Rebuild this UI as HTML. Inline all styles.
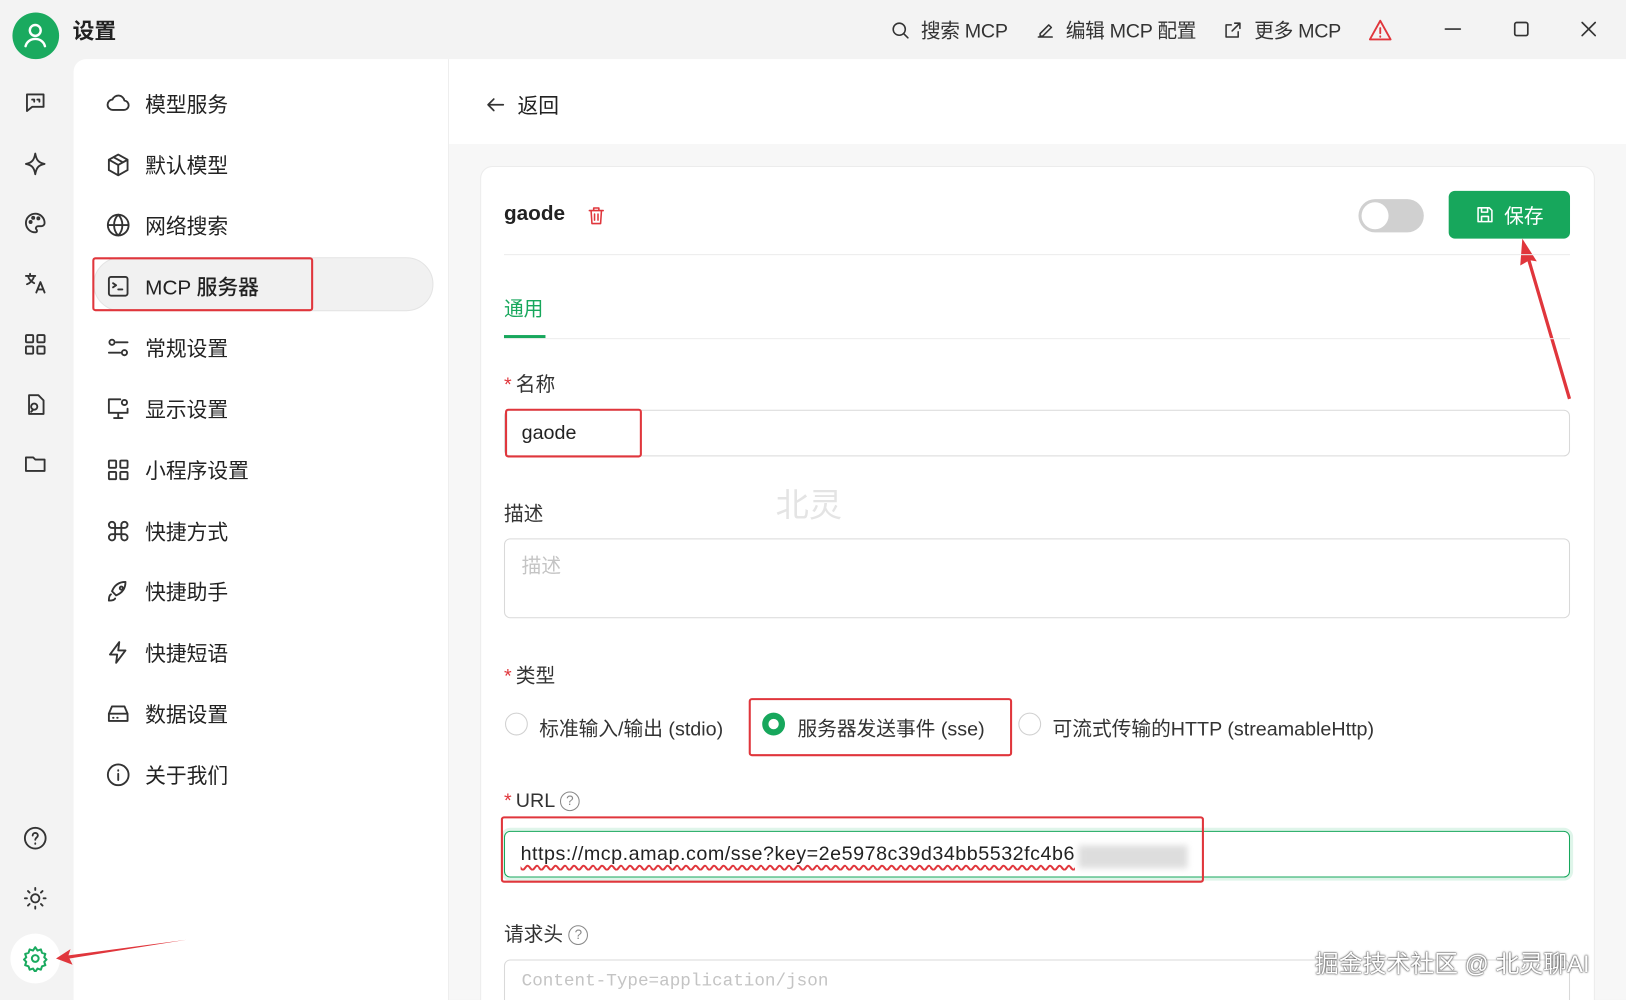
<!DOCTYPE html>
<html><head><meta charset="utf-8"><style>
*{box-sizing:border-box;margin:0;padding:0}
body{width:1626px;height:1000px;overflow:hidden;background:#f3f3f3;font-family:"Liberation Sans","Noto Sans CJK SC",sans-serif;color:#222}
#w{position:absolute;left:0;top:0;width:1568px;height:964px;overflow:hidden;transform:scale(1.037,1.0373);transform-origin:0 0;background:#f3f3f3}
.a{position:absolute}
svg{fill:none;stroke:#333;stroke-width:1.8;stroke-linecap:round;stroke-linejoin:round}
.nav{position:absolute;left:102px;font-size:20px;display:flex;align-items:center;gap:14px;color:#222}
.nav svg{width:24px;height:24px}
.rail svg{position:absolute;left:22px;width:24px;height:24px}
.red{position:absolute;border:2.5px solid #e0363c;border-radius:3px}
.inp{position:absolute;border:1px solid #d9d9d9;border-radius:6px;background:#fff}
.lbl{position:absolute;left:486px;font-size:19px;color:#333}
.lbl b{color:#e0363c;font-weight:normal;margin-right:4px}
.radio{position:absolute;width:22px;height:22px;border:1px solid #d0d0d0;border-radius:50%;background:#fff}
</style></head><body><div id="w">
<div class="a" style="left:12px;top:12px;width:45px;height:45px;border-radius:50%;background:#1aaa5f"><svg viewBox="0 0 24 24" style="width:28px;height:28px;margin:8px;stroke:#fff;stroke-width:2"><circle cx="12" cy="8" r="4.5"/><path d="M4 21c1-4 4.5-6 8-6s7 2 8 6"/></svg></div>
<div class="a" style="left:70px;top:14px;font-size:21px;font-weight:bold">设置</div>
<div class="a" style="left:858px;top:15px;font-size:19px;color:#333;display:flex;gap:26px;align-items:center;letter-spacing:-0.3px">
<span style="display:flex;gap:10px;align-items:center"><svg viewBox="0 0 24 24" width="20" height="20"><circle cx="11" cy="11" r="7"/><path d="M16 16l5 5"/></svg>搜索 MCP</span>
<span style="display:flex;gap:10px;align-items:center"><svg viewBox="0 0 24 24" width="20" height="20"><path d="M4 20h16M6 16l10-10 3 3-10 10H6z"/></svg>编辑 MCP 配置</span>
<span style="display:flex;gap:10px;align-items:center"><svg viewBox="0 0 24 24" width="20" height="20"><path d="M14 4h6v6M20 4l-9 9M18 14v6H4V6h6"/></svg>更多 MCP</span>
<svg viewBox="0 0 24 24" width="24" height="24" style="stroke:#e0363c"><path d="M12 3l10 18H2z M12 10v5M12 18v.5"/></svg>
</div>
<svg class="a" viewBox="0 0 20 20" style="left:1392px;top:19px;width:18px;height:18px"><path d="M2 10h16"/></svg>
<svg class="a" viewBox="0 0 20 20" style="left:1458px;top:19px;width:18px;height:18px"><rect x="3" y="3" width="14" height="14" rx="2"/></svg>
<svg class="a" viewBox="0 0 20 20" style="left:1523px;top:19px;width:18px;height:18px"><path d="M3 3l14 14M17 3L3 17"/></svg>
<div class="rail">
<svg viewBox="0 0 24 24" style="top:87px"><path d="M4 4h16v12H9l-5 4z"/><path d="M9 9h2v2M14 9h2v2"/></svg>
<svg viewBox="0 0 24 24" style="top:146px"><path d="M12 2c1 6 3 9 9 10-6 1-8 4-9 10-1-6-3-9-9-10 6-1 8-4 9-10z"/></svg>
<svg viewBox="0 0 24 24" style="top:203px"><path d="M12 3a9 9 0 100 18c2 0 2-2 1-3s0-3 2-3h3a3 3 0 003-3c0-5-4-9-9-9z"/><circle cx="7.5" cy="11" r="1"/><circle cx="10" cy="7" r="1"/><circle cx="15" cy="7.5" r="1"/></svg>
<svg viewBox="0 0 24 24" style="top:261px"><path d="M3 5h9M7 3v2M5 5c1 4 4 6 6 7M11 5c-1 4-4 7-7 8M13 21l4-10 4 10M14.5 18h5"/></svg>
<svg viewBox="0 0 24 24" style="top:320px"><rect x="3" y="3" width="7" height="7" rx="1"/><rect x="14" y="3" width="7" height="7" rx="1"/><rect x="3" y="14" width="7" height="7" rx="1"/><rect x="14" y="14" width="7" height="7" rx="1"/></svg>
<svg viewBox="0 0 24 24" style="top:378px"><path d="M6 3h9l5 5v13H6zM10 17l-2 2"/><circle cx="11" cy="14" r="3"/></svg>
<svg viewBox="0 0 24 24" style="top:435px"><path d="M3 6h7l2 2h9v11H3z"/></svg>
<svg viewBox="0 0 24 24" style="top:796px"><circle cx="12" cy="12" r="10"/><path d="M9.5 9.5a2.5 2.5 0 015 0c0 2-2.5 2-2.5 4M12 17v.5"/></svg>
<svg viewBox="0 0 24 24" style="top:854px"><circle cx="12" cy="12" r="4"/><path d="M12 2v2M12 20v2M2 12h2M20 12h2M5 5l1.5 1.5M17.5 17.5L19 19M5 19l1.5-1.5M17.5 6.5L19 5"/></svg>
</div>
<div class="a" style="left:10px;top:900px;width:48px;height:48px;border-radius:50%;background:#fff"><svg viewBox="0 0 24 24" style="width:26px;height:26px;margin:11px;stroke:#1aaa5f"><circle cx="12" cy="12" r="3"/><path d="M12 2l2 3 3-1 1 3 3 1-1 3 2 2-2 2 1 3-3 1-1 3-3-1-2 3-2-3-3 1-1-3-3-1 1-3-2-2 2-2-1-3 3-1 1-3 3 1z"/></svg></div>
<div class="a" style="left:71px;top:57px;width:362px;height:907px;background:#fff;border-top-left-radius:12px;border-right:1px solid #eee"></div>
<div class="a" style="left:90px;top:248px;width:328px;height:52px;border-radius:26px;background:#f1f1f1;border:1px solid #e4e4e4"></div>
<div class="nav" style="top:85px"><svg viewBox="0 0 24 24"><path d="M7 18a5 5 0 01-.5-10A6 6 0 0118 9a4.5 4.5 0 01-1 9z"/></svg>模型服务</div>
<div class="nav" style="top:144px"><svg viewBox="0 0 24 24"><path d="M12 2l9 5v10l-9 5-9-5V7zM3 7l9 5 9-5M12 12v10M7.5 4.5l9 5"/></svg>默认模型</div>
<div class="nav" style="top:202px"><svg viewBox="0 0 24 24"><circle cx="12" cy="12" r="10"/><path d="M2 12h20M12 2c3 3 4 6 4 10s-1 7-4 10c-3-3-4-6-4-10s1-7 4-10z"/></svg>网络搜索</div>
<div class="nav" style="top:261px;font-weight:500"><svg viewBox="0 0 24 24"><rect x="3" y="3" width="18" height="18" rx="2"/><path d="M7 9l3 2-3 2M12 15h4"/></svg>MCP 服务器</div>
<div class="red" style="left:89px;top:248px;width:213px;height:52px"></div>
<div class="nav" style="top:320px"><svg viewBox="0 0 24 24"><path d="M10 7h11M3 17h11"/><circle cx="6" cy="7" r="2.5"/><circle cx="18" cy="17" r="2.5"/></svg>常规设置</div>
<div class="nav" style="top:379px"><svg viewBox="0 0 24 24"><path d="M14 3H3v13h18v-4M12 16v5M8 21h8"/><circle cx="18" cy="6" r="2.5"/></svg>显示设置</div>
<div class="nav" style="top:438px"><svg viewBox="0 0 24 24"><rect x="3" y="3" width="7" height="7" rx="1"/><rect x="14" y="3" width="7" height="7" rx="1"/><rect x="3" y="14" width="7" height="7" rx="1"/><rect x="14" y="14" width="7" height="7" rx="1"/></svg>小程序设置</div>
<div class="nav" style="top:497px"><svg viewBox="0 0 24 24"><path d="M9 9V6a3 3 0 10-3 3h12a3 3 0 10-3-3v12a3 3 0 103-3H6a3 3 0 103 3z"/></svg>快捷方式</div>
<div class="nav" style="top:555px"><svg viewBox="0 0 24 24"><path d="M5 15c-2 1-2 5-2 6 1 0 5 0 6-2M9 15l-3-3c2-5 6-9 13-9 0 7-4 11-9 13z"/><circle cx="15" cy="9" r="1.5"/></svg>快捷助手</div>
<div class="nav" style="top:614px"><svg viewBox="0 0 24 24"><path d="M13 2L4 14h7l-1 8 9-12h-7z"/></svg>快捷短语</div>
<div class="nav" style="top:673px"><svg viewBox="0 0 24 24"><path d="M3 12l3-7h12l3 7v7H3zM3 12h18M7 16h.5M11 16h.5"/></svg>数据设置</div>
<div class="nav" style="top:732px"><svg viewBox="0 0 24 24"><circle cx="12" cy="12" r="10"/><path d="M12 11v6M12 7.5v.5"/></svg>关于我们</div>
<svg class="a" viewBox="0 0 130 30" style="left:52px;top:904px;width:130px;height:30px;stroke:none;fill:#e0363c"><path d="M2 20l14-9-2 6L128 2 15 20l3 6z"/></svg>
<div class="a" style="left:433px;top:57px;width:1135px;height:82px;background:#fff"></div>
<div class="a" style="left:433px;top:139px;width:1135px;height:825px;background:#f7f7f7"></div>
<div class="a" style="left:467px;top:86px;font-size:20px;display:flex;align-items:center;gap:10px"><svg viewBox="0 0 24 24" width="22" height="22"><path d="M20 12H4M10 6l-6 6 6 6"/></svg>返回</div>
<div class="a" style="left:463px;top:160px;width:1075px;height:840px;background:#fff;border:1px solid #ececec;border-radius:12px"></div>
<div class="a" style="left:486px;top:195px;font-size:20px;font-weight:bold">gaode</div>
<svg class="a" viewBox="0 0 24 24" style="left:565px;top:198px;width:20px;height:20px;stroke:#e0363c"><path d="M4 6h16M9 6V3h6v3M6 6l1 15h10l1-15M10 10v7M14 10v7"/></svg>
<div class="a" style="left:1310px;top:192px;width:63px;height:32px;border-radius:16px;background:#d0d0d0"><div style="position:absolute;left:3px;top:3px;width:26px;height:26px;border-radius:50%;background:#fff"></div></div>
<div class="a" style="left:1397px;top:184px;width:117px;height:46px;border-radius:6px;background:#17a75c;color:#fff;font-size:19px;display:flex;align-items:center;justify-content:center;gap:8px"><svg viewBox="0 0 24 24" width="20" height="20" style="stroke:#fff"><path d="M4 4h13l3 3v13H4zM8 4v5h7V4M8 20v-6h8v6"/></svg>保存</div>
<svg class="a" viewBox="0 0 60 160" style="left:1458px;top:228px;width:60px;height:160px;stroke:none;fill:#e0363c"><path d="M10 2l14 22-6 -1 39 133-3 1L15 24l-7 4z"/></svg>
<div class="a" style="left:486px;top:245px;width:1028px;height:1px;background:#ececec"></div>
<div class="a" style="left:486px;top:283px;font-size:19px;color:#17a75c">通用</div>
<div class="a" style="left:486px;top:323px;width:40px;height:3px;background:#17a75c"></div>
<div class="a" style="left:486px;top:326px;width:1028px;height:1px;background:#ececec"></div>
<div class="lbl" style="top:356px"><b>*</b>名称</div>
<div class="inp" style="left:486px;top:395px;width:1028px;height:45px"></div>
<div class="a" style="left:503px;top:407px;font-size:19px">gaode</div>
<div class="red" style="left:487px;top:394px;width:132px;height:47px"></div>
<div class="lbl" style="top:481px">描述</div>
<div class="a" style="left:748px;top:462px;font-size:32px;color:#e4e4e4">北灵</div>
<div class="inp" style="left:486px;top:519px;width:1028px;height:77px"></div>
<div class="a" style="left:503px;top:531px;font-size:19px;color:#c4c4c4">描述</div>
<div class="lbl" style="top:637px"><b>*</b>类型</div>
<div class="radio" style="left:487px;top:687px"></div>
<div class="a" style="left:520px;top:688px;font-size:19px;color:#333">标准输入/输出 (stdio)</div>
<div class="radio" style="left:735px;top:687px;border:6px solid #17a75c"></div>
<div class="a" style="left:769px;top:688px;font-size:19px;color:#333">服务器发送事件 (sse)</div>
<div class="red" style="left:722px;top:673px;width:254px;height:56px"></div>
<div class="radio" style="left:982px;top:687px"></div>
<div class="a" style="left:1015px;top:688px;font-size:19px;color:#333">可流式传输的HTTP (streamableHttp)</div>
<div class="lbl" style="top:762px"><b>*</b>URL <span style="display:inline-block;width:19px;height:19px;border:1.5px solid #888;border-radius:50%;font-size:13px;text-align:center;line-height:16px;color:#888;vertical-align:2px">?</span></div>
<div class="inp" style="left:486px;top:801px;width:1028px;height:45px;border:1.5px solid #17a75c;box-shadow:0 0 0 3px #dff5ea"></div>
<div class="a" style="left:502px;top:813px;font-size:19px;color:#222;text-decoration:underline wavy #e0363c;text-underline-offset:4px;letter-spacing:0.5px">https://mcp.amap.com/sse?key=2e5978c39d34bb5532fc4b6</div>
<div class="a" style="left:1040px;top:815px;width:105px;height:22px;background:#ddd;filter:blur(3px)"></div>
<div class="red" style="left:483px;top:787px;width:678px;height:64px"></div>
<div class="lbl" style="top:886px">请求头 <span style="display:inline-block;width:19px;height:19px;border:1.5px solid #888;border-radius:50%;font-size:13px;text-align:center;line-height:16px;color:#888;vertical-align:2px">?</span></div>
<div class="inp" style="left:486px;top:925px;width:1028px;height:60px"></div>
<div class="a" style="left:503px;top:937px;font-size:17px;color:#c4c4c4;font-family:'Liberation Mono',monospace">Content-Type=application/json</div>
<div class="a" style="left:1268px;top:910px;font-size:23px;color:#fff;text-shadow:0 0 2px #333,0 0 1px #333">掘金技术社区 @ 北灵聊AI</div>
</div></body></html>
